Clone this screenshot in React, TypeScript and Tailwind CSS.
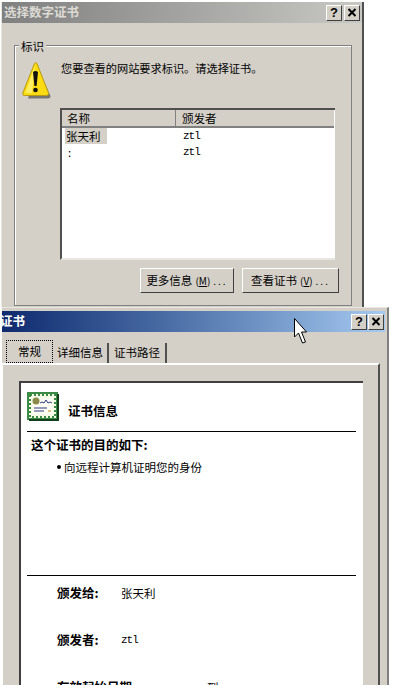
const cjk = "font-['Noto_Sans_CJK_SC','Liberation_Sans',sans-serif]";
const mono = "font-['Liberation_Mono',monospace] text-[11px] tracking-[-1px]";

function CaptionButton({ label }: { label: "?" | "X" }) {
  return (
    <div className="w-[16px] h-[16px] flex items-center justify-center bg-[#d4d0c8] border border-t-white border-l-white border-r-[#404040] border-b-[#404040] font-['Liberation_Sans',sans-serif] text-[13px] font-bold leading-none text-black">
      {label === "?" ? (
        "?"
      ) : (
        <svg width="10" height="9" viewBox="0 0 10 9">
          <path d="M1.5 1 L8.5 8 M8.5 1 L1.5 8" stroke="#000" strokeWidth="2" fill="none" />
        </svg>
      )}
    </div>
  );
}

function WarningIcon() {
  return (
    <svg width="30" height="37" viewBox="0 0 30 37" className="shrink-0">
      <path d="M15 4 L28.5 34 Q28.5 36.5 26 36.5 L6 36.5 Z" fill="#77776f" />
      <path d="M12.5 1.5 Q13.8 -0.2 15 1.5 L26.5 31 Q27 33.5 24.5 33.5 L2.5 33.5 Q0.3 33.5 0.8 31 Z" fill="#fbdc12" stroke="#b89a10" strokeWidth="1" />
      <path d="M13 3 L3.5 31 L10 31 Z" fill="#fff27a" opacity="0.8" />
      <path d="M11 10 Q13.5 8 16 10 L14.6 24 L12.4 24 Z" fill="#111" />
      <circle cx="13.5" cy="28" r="2.3" fill="#111" />
    </svg>
  );
}

function CertIcon() {
  return (
    <svg width="32" height="29" viewBox="0 0 32 29" className="shrink-0">
      <rect x="0" y="0" width="31" height="28" fill="#3b8a46" />
      <rect x="2" y="27" width="30" height="2" fill="#123f1b" />
      <rect x="30" y="2" width="2" height="27" fill="#123f1b" />
      <rect x="2" y="2" width="27" height="24" fill="#f6fbe8" />
      <rect x="3" y="3" width="25" height="22" fill="none" stroke="#3b8a46" strokeWidth="2" strokeDasharray="2 2" />
      <rect x="6" y="6" width="19" height="16" fill="#fffff4" />
      <circle cx="9" cy="9" r="3.5" fill="#8a8a4a" />
      <path d="M13 11 l2 -1 l2 1 l2 -3 l2 3 l2 -1 l2 1" fill="none" stroke="#2a3a8a" strokeWidth="1" />
      <path d="M7 16 H20 M7 19 H17" stroke="#2a3a8a" strokeWidth="1" />
      <path d="M21 19 H24" stroke="#b08a20" strokeWidth="1" />
    </svg>
  );
}

function Cursor() {
  return (
    <svg width="14" height="27" viewBox="0 0 14 27" className="absolute left-[294px] top-[318px]">
      <path d="M0.5 0.5 V19 L4.5 15 L8.5 25 L11.5 24 L7.5 14 L12.5 14 Z" fill="#fff" stroke="#000" strokeWidth="1" />
    </svg>
  );
}

function PushButton({ text, hotkey }: { text: string; hotkey: string }) {
  return (
    <div className="h-[25px] flex items-center justify-center bg-[#d4d0c8] border border-t-white border-l-white border-r-[#404040] border-b-[#404040] text-[11.5px] text-black whitespace-nowrap">
      {text}
      <span className="ml-[3px] text-[10px]">
        (<span className="underline">{hotkey}</span>)
      </span>
      <span className="ml-[3px] tracking-[2px] text-[10px]">...</span>
    </div>
  );
}

function SelectDialog() {
  return (
    <div className="w-[363px] h-[305px] ml-[1px] mt-[2px] bg-[#d4d0c8] border-l border-l-[#e8e6e0] border-r-2 border-r-[#505050] overflow-hidden">
      <div className="h-[21px] flex items-center justify-between px-[2px] bg-gradient-to-r from-[#808080] to-[#c8c8c4]">
        <span className="text-[12.5px] font-bold text-[#dcdad4] leading-none">选择数字证书</span>
        <div className="flex gap-[2px]">
          <CaptionButton label="?" />
          <CaptionButton label="X" />
        </div>
      </div>
      <div className="relative h-[261px] mt-[22px] ml-[12px] mr-[10px] border border-[#808080] shadow-[inset_1px_1px_0_#fff]">
        <span className="absolute -top-[9px] left-[4px] px-[2px] bg-[#d4d0c8] text-[11.5px] leading-[18px] text-black">标识</span>
        <div className="flex gap-[9px] pl-[7px] pt-[16px]">
          <WarningIcon />
          <span className="text-[11.2px] leading-[16px] text-black -mt-[2px]">您要查看的网站要求标识。请选择证书。</span>
        </div>
        <div className="mt-[9px] ml-[45px] w-[275px] h-[152px] bg-white border-l-2 border-t-2 border-l-[#505050] border-t-[#505050] border-b-2 border-b-[#e8e6e0]">
          <div className="flex h-[18px] bg-[#d4d0c8] border-b-2 border-b-[#808080] mr-[1px] text-[11.5px] leading-[16px] text-black">
            <div className="w-[114px] pl-[5px] border-r border-r-[#808080]">名称</div>
            <div className="pl-[6px]">颁发者</div>
          </div>
          <div className="flex h-[16px] text-[11.5px] leading-[16px] text-black">
            <div className="w-[115px] pl-[3px]">
              <span className="inline-block w-[42px] bg-[#d4d0c8] pl-[1px]">张天利</span>
            </div>
            <div className={`pl-[6px] ${mono}`}>ztl</div>
          </div>
          <div className="flex h-[16px] text-[11.5px] leading-[16px] text-black">
            <div className="w-[115px] pl-[6px]">:</div>
            <div className={`pl-[6px] ${mono}`}>ztl</div>
          </div>
        </div>
        <div className="flex justify-end gap-[8px] mt-[8px] mr-[12px]">
          <div className="w-[94px]"><PushButton text="更多信息" hotkey="M" /></div>
          <div className="w-[97px]"><PushButton text="查看证书" hotkey="V" /></div>
        </div>
      </div>
    </div>
  );
}

function InfoRow({ label, value, isMono, far }: { label: string; value: string; isMono?: boolean; far?: boolean }) {
  return (
    <div className="flex pl-[30px] h-[47px] text-[11.5px] leading-[16px] text-black">
      <span className={`${far ? "w-[150px]" : "w-[64px]"} shrink-0 font-bold text-[12.5px] whitespace-nowrap`}>{label}{far ? "" : ":"}</span>
      <span className={isMono ? mono : ""}>{value}</span>
    </div>
  );
}

function CertDialog() {
  return (
    <div className="w-[387px] h-[378px] ml-[2px] bg-[#d4d0c8] border-t border-t-[#e8e6e0] border-r-2 border-r-[#808080] overflow-hidden">
      <div className="h-[21px] mt-[3px] mr-[2px] flex items-center justify-between pr-[1px] bg-gradient-to-r from-[#0f2a6e] to-[#a6caf0]">
        <span className="text-[12.5px] font-bold text-white leading-none -ml-[2px]">证书</span>
        <div className="flex gap-[1px]">
          <CaptionButton label="?" />
          <CaptionButton label="X" />
        </div>
      </div>
      <div className="flex items-end h-[31px] pl-[4px] text-[11.5px] text-black">
        <div className="h-[23px] w-[47px] flex items-center justify-center border border-dotted border-black bg-[#d4d0c8]">常规</div>
        <div className="h-[20px] w-[56px] flex items-center justify-center border-r-2 border-r-[#505050]">详细信息</div>
        <div className="h-[20px] w-[58px] flex items-center justify-center border-r-2 border-r-[#505050]">证书路径</div>
      </div>
      <div className="mr-[7px] h-[322px] border-t-2 border-t-white border-r-2 border-r-[#505050] border-l border-l-white pl-[16px] pr-[15px] pt-[16px]">
        <div className="h-[306px] bg-white border-t-2 border-l-2 border-t-[#404040] border-l-[#404040] pr-[7px] pl-[6px]">
          <div className="flex items-start gap-[9px] pt-[9px] h-[49px] border-b border-b-black">
            <CertIcon />
            <span className="text-[12.5px] leading-[18px] font-bold text-black mt-[10px]">证书信息</span>
          </div>
          <div className="pl-[4px] pt-[4px] text-[12.5px] font-bold leading-[18px] text-black">这个证书的目的如下:</div>
          <div className="flex items-center gap-[3px] pl-[30px] pt-[4px] text-[11.5px] leading-[18px] text-black">
            <div className="w-[4px] h-[4px] rounded-full bg-black" />
            <span>向远程计算机证明您的身份</span>
          </div>
          <div className="mt-[99px] border-t border-t-black pt-[9px]">
            <InfoRow label="颁发给" value="张天利" />
            <InfoRow label="颁发者" value="ztl" isMono />
            <InfoRow label="有效起始日期" value="到" far />
          </div>
        </div>
      </div>
    </div>
  );
}

export default function App() {
  return (
    <div className={`relative w-[405px] h-[685px] bg-white overflow-hidden ${cjk}`}>
      <SelectDialog />
      <CertDialog />
      <Cursor />
    </div>
  );
}
